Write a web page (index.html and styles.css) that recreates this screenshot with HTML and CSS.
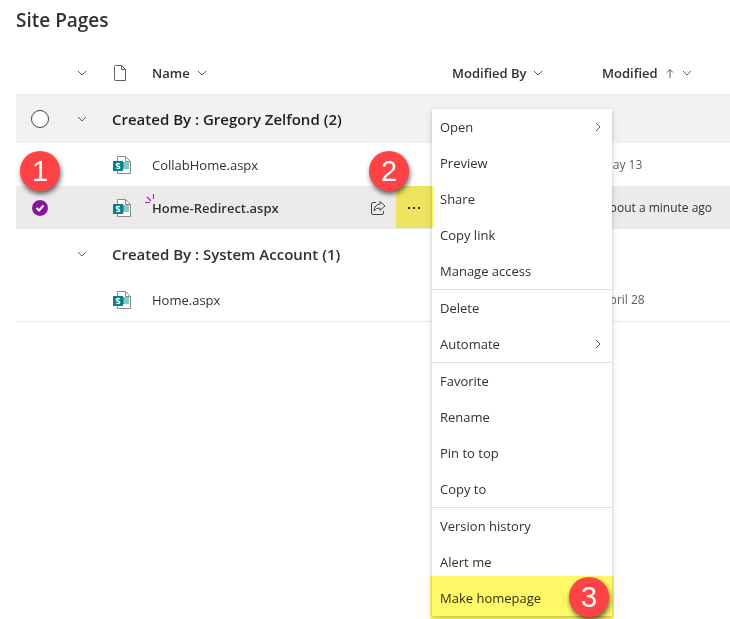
FILE: index.html
```html
<!DOCTYPE html>
<html lang="en">
<head>
    <meta charset="UTF-8">
    <meta name="viewport" content="width=device-width, initial-scale=1.0">
    <title>Site Pages</title>
    <link rel="stylesheet" href="styles.css">
</head>
<body>
    <!-- Shared icons -->
    <svg class="icon-defs" aria-hidden="true">
        <symbol id="chevron-down" viewBox="0 0 10 10">
            <path d="M1 3l4 4 4-4" fill="none" stroke="currentColor"/>
        </symbol>
        <symbol id="chevron-right" viewBox="0 0 10 10">
            <path d="M3 1l4 4-4 4" fill="none" stroke="currentColor"/>
        </symbol>
        <symbol id="aspx-page" viewBox="0 0 20 20">
            <path d="M5.500 1.500h8l5 5v12h-13z" fill="#fff" stroke="#8a8a8a"/>
            <path d="M13.500 1.500v5h5" fill="none" stroke="#8a8a8a"/>
            <path d="M9 7h8v7H9z" fill="#83c9ca"/>
            <path d="M9 7h3v7H9z" fill="#4aa5a7"/>
            <path d="M1 6h10v10H1z" fill="#038387"/>
            <path d="M7.900 9Q7.300 8.500 6.100 8.500Q4.400 8.500 4.400 9.700Q4.400 10.700 6 11Q7.800 11.300 7.800 12.300Q7.800 13.500 6 13.500Q4.700 13.500 4.100 12.900" fill="none" stroke="#fff" stroke-width="1.300"/>
        </symbol>
    </svg>

    <main class="page">
        <h1>Site Pages</h1>

        <table class="file-list">
            <colgroup>
                <col class="col-select">
                <col class="col-expand">
                <col class="col-type">
                <col class="col-name">
                <col class="col-modified-by">
                <col class="col-modified">
            </colgroup>
            <thead>
                <tr>
                    <th></th>
                    <th><button class="icon-button" aria-label="Collapse all groups"><svg class="chevron"><use href="#chevron-down"/></svg></button></th>
                    <th>
                        <svg class="file-icon" viewBox="0 0 20 20" role="img" aria-label="Type">
                            <path d="M4 2.500h5.500l4 4v11H3.500q-1 0-1-1v-13q0-1 1-1zM9.500 2.500v4h4" fill="none" stroke="#605e5c" stroke-linejoin="round"/>
                        </svg>
                    </th>
                    <th><button class="column-title">Name <svg class="chevron"><use href="#chevron-down"/></svg></button></th>
                    <th><button class="column-title">Modified By <svg class="chevron"><use href="#chevron-down"/></svg></button></th>
                    <th>
                        <button class="column-title">Modified
                            <svg class="chevron" viewBox="0 0 10 10"><path d="M5 10V1.500M2 4.500l3-3 3 3" fill="none" stroke="currentColor"/></svg>
                            <svg class="chevron"><use href="#chevron-down"/></svg>
                        </button>
                    </th>
                </tr>
            </thead>
            <tbody>
                <tr class="group hovered">
                    <td><input type="checkbox" class="row-check" aria-label="Select group Gregory Zelfond"></td>
                    <td><button class="icon-button" aria-label="Collapse group"><svg class="chevron"><use href="#chevron-down"/></svg></button></td>
                    <th colspan="4" scope="rowgroup">Created By : Gregory Zelfond (2)</th>
                </tr>
                <tr>
                    <td></td>
                    <td></td>
                    <td><svg class="file-icon"><use href="#aspx-page"/></svg></td>
                    <td><a href="#">CollabHome.aspx</a></td>
                    <td></td>
                    <td class="date">May 13</td>
                </tr>
                <tr class="selected">
                    <td><input type="checkbox" class="row-check" aria-label="Select Home-Redirect.aspx" checked></td>
                    <td></td>
                    <td><svg class="file-icon"><use href="#aspx-page"/></svg></td>
                    <td>
                        <div class="name-cell">
                            <svg class="new-mark" viewBox="0 0 10 10" aria-hidden="true">
                                <path d="M0 8.500h5M2 3l4 4M8.500 0v5" fill="none" stroke="#a32bb3" stroke-width="1.200"/>
                            </svg>
                            <a href="#">Home-Redirect.aspx</a>
                            <button class="action" aria-label="Share">
                                <svg class="share-icon" viewBox="0 0 16 16">
                                    <path d="M6 2.500H3Q1.500 2.500 1.500 4v9Q1.500 14.500 3 14.500h9Q13.500 14.500 13.500 13v-2" fill="none" stroke="#484644"/>
                                    <path d="M10 1.500l5 4.500-5 4.500V8Q6 7.800 4 11Q4.500 4.500 10 4z" fill="none" stroke="#484644" stroke-linejoin="round"/>
                                </svg>
                            </button>
                            <button class="action" aria-label="Show more actions">
                                <svg class="more-icon" viewBox="0 0 16 16">
                                    <path d="M2 7h2v2H2zM7 7h2v2H7zM12 7h2v2h-2z" fill="#323130"/>
                                </svg>
                                <span class="highlight"></span>
                            </button>
                        </div>
                    </td>
                    <td></td>
                    <td class="date">About a minute ago</td>
                </tr>
                <tr class="group">
                    <td></td>
                    <td><button class="icon-button" aria-label="Collapse group"><svg class="chevron"><use href="#chevron-down"/></svg></button></td>
                    <th colspan="4" scope="rowgroup">Created By : System Account (1)</th>
                </tr>
                <tr class="last">
                    <td></td>
                    <td></td>
                    <td><svg class="file-icon"><use href="#aspx-page"/></svg></td>
                    <td><a href="#">Home.aspx</a></td>
                    <td></td>
                    <td class="date">April 28</td>
                </tr>
            </tbody>
        </table>
    </main>

    <div class="context-menu" role="menu">
        <div class="menu-section">
            <button role="menuitem">Open <svg class="chevron"><use href="#chevron-right"/></svg></button>
            <button role="menuitem">Preview</button>
            <button role="menuitem">Share</button>
            <button role="menuitem">Copy link</button>
            <button role="menuitem">Manage access</button>
        </div>
        <div class="menu-section">
            <button role="menuitem">Delete</button>
            <button role="menuitem">Automate <svg class="chevron"><use href="#chevron-right"/></svg></button>
        </div>
        <div class="menu-section">
            <button role="menuitem">Favorite</button>
            <button role="menuitem">Rename</button>
            <button role="menuitem">Pin to top</button>
            <button role="menuitem">Copy to</button>
        </div>
        <div class="menu-section">
            <button role="menuitem">Version history</button>
            <button role="menuitem">Alert me</button>
            <button role="menuitem" class="homepage-item">Make homepage</button>
        </div>
    </div>

    <!-- Step numbers -->
    <span class="step step-1">1</span>
    <span class="step step-2">2</span>
    <span class="step step-3">3</span>
</body>
</html>
```
FILE: styles.css
```css
html {
    background-color: #ffffff;
}
body {
    font-family: 'Open Sans', 'Noto Sans', sans-serif;
    font-size: 13px;
    margin: 0;
    min-height: 100vh;
    position: relative;
    background-color: #ffffff;
    color: #323130;
}
button {
    font: inherit;
    color: inherit;
    background: none;
    border: 0;
    padding: 0;
}
svg {
    display: block;
    flex: none;
}
.icon-defs {
    position: absolute;
    width: 0;
    height: 0;
}
.page {
    padding: 6px 0 0 16px;
}
h1 {
    font-size: 19px;
    font-weight: 600;
    line-height: 28px;
    margin: 0 0 18px;
}

/* File list */
.file-list {
    width: 100%;
    border-collapse: separate;
    border-spacing: 0;
    table-layout: fixed;
}
.col-select {
    width: 48px;
}
.col-expand {
    width: 40px;
}
.col-type {
    width: 40px;
}
.col-name {
    width: 300px;
}
.col-modified-by {
    width: 150px;
}
th, td {
    height: 43px;
    padding: 0 8px;
    box-sizing: border-box;
    text-align: left;
    white-space: nowrap;
}
thead th {
    font-weight: 600;
    border-bottom: 1px solid #edebe9;
}
.group td, .group th {
    height: 49px;
}
.group th {
    font-size: 15px;
    font-weight: 600;
}
.hovered {
    background-color: #f3f2f1;
    color: #201f1e;
}
.group.hovered td, .group.hovered th {
    height: 48px;
}
.selected {
    background-color: #edebe9;
}
.selected a {
    font-weight: 600;
}
.last td {
    height: 44px;
    border-bottom: 1px solid #edebe9;
}
.date {
    font-size: 12px;
    color: #605e5c;
}
.selected .date {
    color: #323130;
}
a {
    color: inherit;
    text-decoration: none;
}
.column-title {
    display: flex;
    align-items: center;
    gap: 7px;
}
.icon-button {
    display: block;
    padding: 5px;
}
.chevron {
    width: 10px;
    height: 10px;
    color: #605e5c;
}
.file-icon {
    width: 20px;
    height: 20px;
}
.row-check {
    appearance: none;
    display: block;
    width: 18px;
    height: 18px;
    margin: 0 7px;
    border: 1px solid #484644;
    border-radius: 50%;
    background: #ffffff;
}
.row-check:checked {
    border: 1px solid #ffffff;
    background: #881798 url("data:image/svg+xml,%3Csvg xmlns='http://www.w3.org/2000/svg' viewBox='0 0 14 14'%3E%3Cpath d='M3.500 7l2.500 2.500 4.500-5' fill='none' stroke='white' stroke-width='2'/%3E%3C/svg%3E") center / 14px no-repeat;
}

/* Name with row actions */
.name-cell {
    display: flex;
    align-items: center;
    height: 43px;
    position: relative;
    margin-right: 4px;
}
.name-cell a {
    flex: 1;
}
.new-mark {
    position: absolute;
    left: -7px;
    top: 8px;
    width: 10px;
    height: 10px;
}
.action {
    display: flex;
    align-items: center;
    justify-content: center;
    align-self: stretch;
    width: 36px;
    position: relative;
}
.share-icon, .more-icon {
    width: 16px;
    height: 16px;
}
.highlight {
    position: absolute;
    inset: 0 -2px 1px 0;
    background-color: #fff968;
    mix-blend-mode: multiply;
    z-index: 3;
}

/* Context menu */
.context-menu {
    position: absolute;
    left: 432px;
    top: 109px;
    width: 180px;
    background-color: #ffffff;
    box-shadow: 0 3px 7px rgba(0, 0, 0, 0.13), 0 1px 3px rgba(0, 0, 0, 0.16);
    z-index: 2;
}
.menu-section + .menu-section {
    border-top: 1px solid #e1dfdd;
}
.context-menu button {
    display: flex;
    align-items: center;
    justify-content: space-between;
    width: 100%;
    height: 36px;
    padding: 0 9px 0 8px;
}
.context-menu .homepage-item {
    position: relative;
}
.homepage-item::after {
    content: "";
    position: absolute;
    inset: -4px -2px -3px;
    background-color: #fff968;
    mix-blend-mode: multiply;
}

/* Step numbers */
.step {
    position: absolute;
    width: 40px;
    height: 40px;
    border-radius: 50%;
    background-color: #fd4345;
    color: #ffffff;
    font-family: 'Liberation Sans', Arial, sans-serif;
    font-size: 29px;
    line-height: 40px;
    text-align: center;
    box-shadow: 1px 3px 5px rgba(0, 0, 0, 0.6);
    z-index: 4;
}
.step-1 {
    left: 20px;
    top: 151px;
}
.step-2 {
    left: 369px;
    top: 151px;
}
.step-3 {
    left: 569px;
    top: 577px;
}
```
